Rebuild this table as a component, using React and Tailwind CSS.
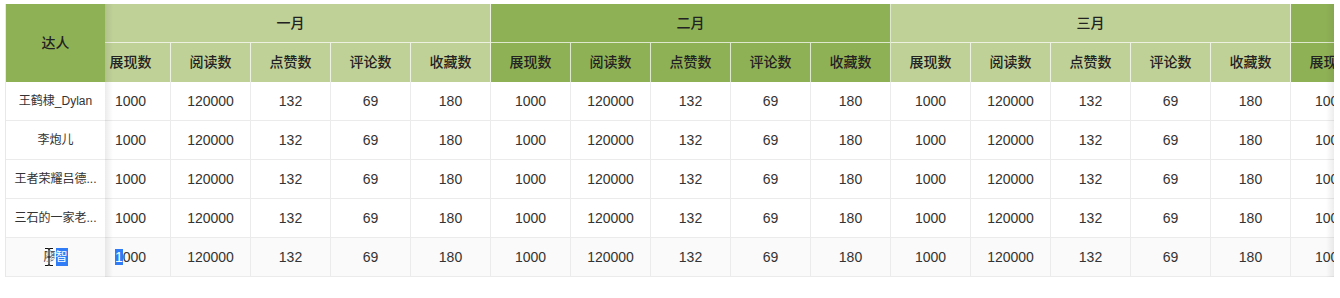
import React from 'react';

const months = ['一月', '二月', '三月', '四月'];
const metrics = ['展现数', '阅读数', '点赞数', '评论数', '收藏数'];
const values = ['1000', '120000', '132', '69', '180'];
const names = ['王鹤棣_Dylan', '李炮儿', '王者荣耀吕德...', '三石的一家老...', '廖智'];

const light = 'bg-[#bfd197]';
const dark = 'bg-[#8fb155]';

const IBeam = () => (
  <svg width="12" height="20" viewBox="0 0 12 20" className="absolute left-[37px] top-[9px]">
    <path d="M2 1.5h3l1 1 1-1h3M6 2.5v15M2 18.5h3l1-1 1 1h3M4 10h4" fill="none" stroke="#fff" strokeWidth="3" />
    <path d="M2 1.5h3l1 1 1-1h3M6 2.5v15M2 18.5h3l1-1 1 1h3M4 10h4" fill="none" stroke="#111" strokeWidth="1.2" />
  </svg>
);

const App = () => {
  return (
    <div className="min-h-[298px] bg-white pl-[5px] pt-[4px] text-[#333]" style={{ fontFamily: '"Liberation Sans", "Noto Sans CJK SC", sans-serif' }}>
      <div className="relative flex w-[1329px] overflow-hidden border-l border-[#e8e8e8]">
        {/* fixed first column */}
        <div className="relative z-10 w-[99px] shrink-0 bg-white">
          <div className={`flex h-[78px] items-center justify-center ${dark} text-[14px] font-medium text-[#222]`}>达人</div>
          {names.map((n, i) => (
            <div
              key={i}
              className={`relative flex h-[39px] items-center justify-center border-b border-[#ebebeb] text-[12px] ${i === 4 ? 'bg-[#fafafa]' : 'bg-white'}`}
            >
              {i === 4 ? (
                <>
                  <span>廖</span>
                  <span className="bg-[#2f7cf6] text-white">智</span>
                  <IBeam />
                </>
              ) : n}
            </div>
          ))}
          <div className="pointer-events-none absolute right-[-8px] top-0 h-full w-[8px] bg-gradient-to-r from-[rgba(0,0,0,0.08)] to-transparent" />
        </div>

        {/* scrolled area */}
        <div className="w-[1230px] shrink-0 overflow-hidden">
          <div className="ml-[-14px] w-[1600px]">
            <div className="flex">
              {months.map((m, i) => (
                <div
                  key={m}
                  className={`flex h-[39px] w-[400px] items-center justify-center border-b border-r border-white/70 text-[14px] font-medium text-[#222] ${i % 2 === 0 ? light : dark}`}
                >
                  {m}
                </div>
              ))}
            </div>
            <div className="flex">
              {months.map((m, i) =>
                metrics.map((k) => (
                  <div
                    key={m + k}
                    className={`flex h-[39px] w-[80px] items-center justify-center border-r border-white/70 text-[14px] font-medium text-[#222] ${i % 2 === 0 ? light : dark}`}
                  >
                    {k}
                  </div>
                ))
              )}
            </div>
            {names.map((n, r) => (
              <div key={r} className={`flex ${r === 4 ? 'bg-[#fafafa]' : 'bg-white'}`}>
                {months.map((m, i) =>
                  values.map((v, j) => (
                    <div
                      key={m + j}
                      className="flex h-[39px] w-[80px] items-center justify-center border-b border-r border-[#ebebeb] text-[14px]"
                    >
                      {r === 4 && i === 0 && j === 0 ? (
                        <span>
                          <span className="bg-[#2f7cf6] text-white">1</span>000
                        </span>
                      ) : v}
                    </div>
                  ))
                )}
              </div>
            ))}
          </div>
        </div>

        <div className="pointer-events-none absolute right-0 top-0 h-full w-[8px] bg-gradient-to-l from-[rgba(0,0,0,0.07)] to-transparent" />
      </div>
    </div>
  );
};

export default App;
